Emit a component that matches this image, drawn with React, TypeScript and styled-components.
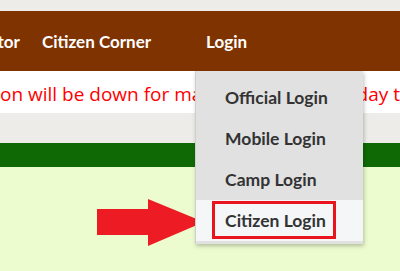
import React from "react";
import styled, { createGlobalStyle } from "styled-components";

const GlobalStyle = createGlobalStyle`
  html, body { margin: 0; padding: 0; }
  body {
    background: #edece8;
    font-family: "Lato", "Open Sans", sans-serif;
    overflow: hidden;
  }
`;

const Page = styled.div`
  width: 400px;
  height: 271px;
  display: flex;
  flex-direction: column;
  overflow: hidden;
  background: #edece8;
`;

const TopGap = styled.div`
  height: 11px;
  flex: none;
`;

const Header = styled.header`
  height: 60px;
  flex: none;
  background: #7f3300;
  display: flex;
  align-items: center;
  position: relative;
  z-index: 2;
`;

const Nav = styled.ul`
  list-style: none;
  margin: 0 0 0 -60px;
  padding: 0;
  display: flex;
  align-items: center;
  height: 100%;
`;

const NavItem = styled.li<{ $gap: number }>`
  position: relative;
  height: 100%;
  display: flex;
  align-items: center;
  margin-right: ${(p) => p.$gap}px;
  padding: 0 11px;
  color: #ffffff;
  font-weight: 700;
  font-size: 17px;
  white-space: nowrap;
`;

const Dropdown = styled.ul`
  position: absolute;
  top: 100%;
  left: 0;
  width: 167px;
  margin: 0;
  padding: 6px 0 3px;
  list-style: none;
  background: #e1e1e1;
  box-shadow: 1px 2px 4px rgba(0, 0, 0, 0.25);
  border-left: 1px solid #cfcfcf;
`;

const DropItem = styled.li<{ $active?: boolean }>`
  position: relative;
  height: 41px;
  display: flex;
  align-items: center;
  padding-left: 29px;
  color: #333333;
  font-weight: 700;
  font-size: 17.5px;
  background: ${(p) => (p.$active ? "#f5f6f8" : "transparent")};
`;

const Highlight = styled.span`
  position: absolute;
  left: 16px;
  right: 27px;
  top: 1px;
  bottom: 2px;
  border: 3px solid #e8141e;
  box-sizing: border-box;
`;

const Notice = styled.div`
  height: 42px;
  flex: none;
  background: #ffffff;
  display: flex;
  align-items: center;
  overflow: hidden;
  white-space: nowrap;
`;

const NoticeText = styled.span`
  color: #ff0000;
  font-family: "Open Sans", "Noto Sans", sans-serif;
  font-size: 19px;
  margin-top: 4px;
`;

const Spacer = styled.div`
  height: 30px;
  flex: none;
`;

const GreenBar = styled.div`
  height: 24px;
  flex: none;
  background: #0f6a05;
`;

const Content = styled.main`
  flex: 1;
  background: #edfccf;
  position: relative;
`;

const Arrow = styled.svg`
  position: absolute;
  left: 97px;
  top: 32px;
`;

export default function App() {
  return (
    <>
      <GlobalStyle />
      <Page>
        <TopGap />
        <Header>
          <Nav>
            <NavItem $gap={0}>Collector</NavItem>
            <NavItem $gap={33}>Citizen Corner</NavItem>
            <NavItem $gap={0}>
              Login
              <Dropdown>
                <DropItem>Official Login</DropItem>
                <DropItem>Mobile Login</DropItem>
                <DropItem>Camp Login</DropItem>
                <DropItem $active>
                  Citizen Login
                  <Highlight />
                </DropItem>
              </Dropdown>
            </NavItem>
          </Nav>
        </Header>
        <Notice>
          <NoticeText>on will be down for maintenance on Sunday till noon</NoticeText>
        </Notice>
        <Spacer />
        <GreenBar />
        <Content>
          <Arrow width="107" height="47" viewBox="0 0 107 47">
            <polygon
              points="0,10 51,10 51,0 107,23 51,47 51,36 0,36"
              fill="#ed1c24"
            />
          </Arrow>
        </Content>
      </Page>
    </>
  );
}
